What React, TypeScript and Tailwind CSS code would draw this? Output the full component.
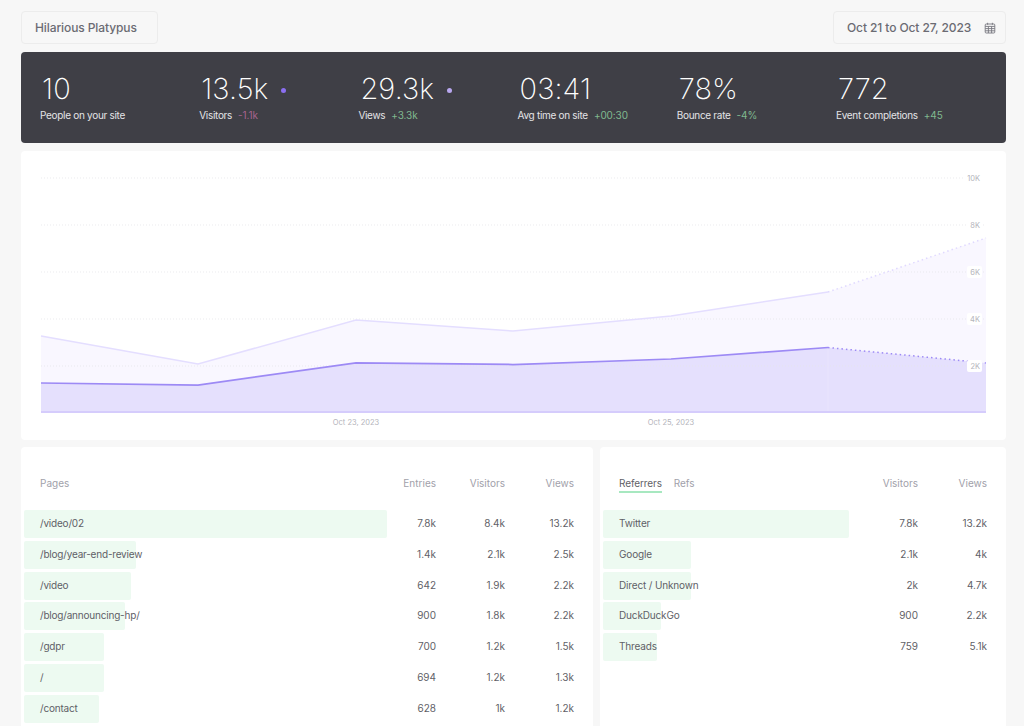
const stats = [
  { value: '10', label: 'People on your site' },
  { value: '13.5k', label: 'Visitors', delta: '-1.1k', bad: true, dot: 'bg-[#8b6ff0]' },
  { value: '29.3k', label: 'Views', delta: '+3.3k', dot: 'bg-[#b9a8f0]' },
  { value: '03:41', label: 'Avg time on site', delta: '+00:30' },
  { value: '78%', label: 'Bounce rate', delta: '-4%' },
  { value: '772', label: 'Event completions', delta: '+45' },
];

const pages = [
  { name: '/video/02', bar: 363, entries: '7.8k', visitors: '8.4k', views: '13.2k' },
  { name: '/blog/year-end-review', bar: 112, entries: '1.4k', visitors: '2.1k', views: '2.5k' },
  { name: '/video', bar: 107, entries: '642', visitors: '1.9k', views: '2.2k' },
  { name: '/blog/announcing-hp/', bar: 101, entries: '900', visitors: '1.8k', views: '2.2k' },
  { name: '/gdpr', bar: 80, entries: '700', visitors: '1.2k', views: '1.5k' },
  { name: '/', bar: 80, entries: '694', visitors: '1.2k', views: '1.3k' },
  { name: '/contact', bar: 75, entries: '628', visitors: '1k', views: '1.2k' },
];

const referrers = [
  { name: 'Twitter', bar: 246, visitors: '7.8k', views: '13.2k' },
  { name: 'Google', bar: 88, visitors: '2.1k', views: '4k' },
  { name: 'Direct / Unknown', bar: 88, visitors: '2k', views: '4.7k' },
  { name: 'DuckDuckGo', bar: 58, visitors: '900', views: '2.2k' },
  { name: 'Threads', bar: 54, visitors: '759', views: '5.1k' },
];

function CalendarGrid() {
  return (
    <svg viewBox="0 0 12 12" className="h-[12px] w-[12px]" fill="none" stroke="#77777f" strokeWidth={0.9}>
      <rect x={1.2} y={2} width={9.6} height={9} rx={1} />
      <path d="M3.6 0.8v2M8.4 0.8v2M1.2 4.4h9.6M1.2 6.6h9.6M1.2 8.8h9.6M4.4 4.4V11M7.6 4.4V11" />
    </svg>
  );
}

function Chart() {
  // coordinates are the chart card's own, card starts at 21,151
  const base = 262;
  const xs = [20, 177, 335, 492, 650, 807, 965];
  const upper = [185, 213, 169, 180, 165, 141, 87];
  const lower = [232, 234, 212, 213.5, 208, 196.5, 212];
  const solid = (ys: number[]) => xs.slice(0, 6).map((x, i) => `${x},${ys[i]}`).join(' ');
  const area = (ys: number[]) => `${xs[0]},${base} ${xs.map((x, i) => `${x},${ys[i]}`).join(' ')} ${xs[6]},${base}`;
  const grid = [
    { y: 27, label: '10K' },
    { y: 74, label: '8K' },
    { y: 121, label: '6K' },
    { y: 168, label: '4K' },
    { y: 215, label: '2K' },
  ];

  return (
    <svg viewBox="0 0 985 289" className="block h-full w-full">
      <polygon points={area(upper)} fill="#f9f7ff" />
      <polygon points={area(lower)} fill="#e5e0fd" />
      {grid.map((g) => (
        <line key={g.y} x1={20} x2={965} y1={g.y} y2={g.y} stroke="#e6e6ea" strokeOpacity={0.8} strokeWidth={1} strokeDasharray="1 2" />
      ))}
      <line x1={807} x2={807} y1={197} y2={base} stroke="#e9e4fd" strokeWidth={1} />
      <polyline points={solid(upper)} fill="none" stroke="#e4deff" strokeWidth={1.5} />
      <polyline points={solid(lower)} fill="none" stroke="#9d8af5" strokeWidth={1.75} />
      <line x1={807} y1={141} x2={965} y2={87} stroke="#e0d9ff" strokeWidth={1.5} strokeDasharray="1.5 3" />
      <line x1={807} y1={196.5} x2={965} y2={212} stroke="#9d8af5" strokeWidth={1.5} strokeDasharray="1.5 3" />
      <line x1={20} x2={965} y1={261} y2={261} stroke="#d5ccfc" strokeWidth={2} />
      {grid.map((g) => (
        <g key={`label-${g.y}`}>
          <rect x={g.label === '10K' ? 943 : 946} y={g.y - 6} width={g.label === '10K' ? 20 : 15} height={12} rx={2} fill="#ffffff" />
          <text x={959} y={g.y + 2.5} textAnchor="end" fontSize={7.5} fill="#b4b4bb">
            {g.label}
          </text>
        </g>
      ))}
      <text x={335} y={274} textAnchor="middle" fontSize={7.5} fill="#b4b4bb">
        Oct 23, 2023
      </text>
      <text x={650} y={274} textAnchor="middle" fontSize={7.5} fill="#b4b4bb">
        Oct 25, 2023
      </text>
    </svg>
  );
}

export default function App() {
  return (
    <div className="h-[726px] overflow-hidden bg-[#f7f7f7] pl-[21px] pr-[18px] pt-[11px] font-['Inter',sans-serif]">
      <div className="flex justify-between">
        <div className="flex h-[33px] w-[137px] items-center rounded border border-[#ececec] pl-[13px] text-[12px] font-medium tracking-[-0.1px] text-[#6b6b73]">
          Hilarious Platypus
        </div>
        <div className="flex h-[33px] w-[173px] items-center justify-between rounded border border-[#ececec] pl-[13px] pr-[9px] text-[12px] font-medium tracking-[-0.1px] text-[#6b6b73]">
          Oct 21 to Oct 27, 2023
          <CalendarGrid />
        </div>
      </div>

      <div className="mt-2 flex h-[91px] rounded bg-[#3f3f46] pl-[19px] pt-[19px]">
        {stats.map((s) => (
          <div key={s.label} className="w-[159.2px]">
            <div className="flex items-center gap-[13px] pl-[2px] text-[29px] leading-[36px] font-extralight tracking-[0.1px] text-white">
              {s.value}
              {s.dot && <span className={`mt-[2px] h-[5px] w-[5px] rounded-full ${s.dot}`} />}
            </div>
            <div className="mt-[1px] flex items-center gap-[6px] text-[10px] leading-[14px] tracking-[-0.3px] text-[#e4e4e7]">
              {s.label}
              {s.delta && <span className={`tracking-[-0.1px] ${s.bad ? 'text-[#a8648f]' : 'text-[#7fb98f]'}`}>{s.delta}</span>}
            </div>
          </div>
        ))}
      </div>

      <div className="mt-2 h-[289px] rounded bg-white">
        <Chart />
      </div>

      <div className="mt-[7px] flex gap-[7px]">
        <div className="h-[300px] w-[572px] rounded bg-white px-[3px] pt-[29px]">
          <div className="flex h-[14px] items-center px-[16px] text-[10px] text-[#a1a1aa]">
            <span className="flex-1">Pages</span>
            <span className="w-[60px] text-right">Entries</span>
            <span className="w-[69px] text-right">Visitors</span>
            <span className="w-[69px] text-right">Views</span>
          </div>
          <div className="mt-[20px] flex flex-col gap-[2.8px]">
            {pages.map((p) => (
              <div key={p.name} className="relative flex h-[28px] items-center px-[16px] pb-[1px] text-[10px] text-[#5f5f67]">
                <div className="absolute inset-y-0 left-0 rounded-[2px] bg-[#edfaf1]" style={{ width: p.bar }} />
                <span className="relative flex-1 tracking-[-0.2px]">{p.name}</span>
                <span className="relative w-[60px] text-right">{p.entries}</span>
                <span className="relative w-[69px] text-right">{p.visitors}</span>
                <span className="relative w-[69px] text-right">{p.views}</span>
              </div>
            ))}
            <div className="h-[28px] w-[75px] rounded-[2px] bg-[#edfaf1]" />
          </div>
        </div>

        <div className="h-[300px] flex-1 rounded bg-white px-[3px] pt-[29px]">
          <div className="flex h-[14px] items-center px-[16px] text-[10px] text-[#a1a1aa]">
            <div className="mt-[2px] flex flex-1 gap-[12px] tracking-[-0.1px]">
              <span className="border-b-2 border-[#a7e8c0] text-[#5f5f67]">Referrers</span>
              <span className="border-b-2 border-transparent">Refs</span>
            </div>
            <span className="w-[69px] text-right">Visitors</span>
            <span className="w-[69px] text-right">Views</span>
          </div>
          <div className="mt-[20px] flex flex-col gap-[2.8px]">
            {referrers.map((r) => (
              <div key={r.name} className="relative flex h-[28px] items-center px-[16px] pb-[1px] text-[10px] text-[#5f5f67]">
                <div className="absolute inset-y-0 left-0 rounded-[2px] bg-[#edfaf1]" style={{ width: r.bar }} />
                <span className="relative flex-1 tracking-[-0.15px]">{r.name}</span>
                <span className="relative w-[69px] text-right">{r.visitors}</span>
                <span className="relative w-[69px] text-right">{r.views}</span>
              </div>
            ))}
          </div>
        </div>
      </div>
    </div>
  );
}
